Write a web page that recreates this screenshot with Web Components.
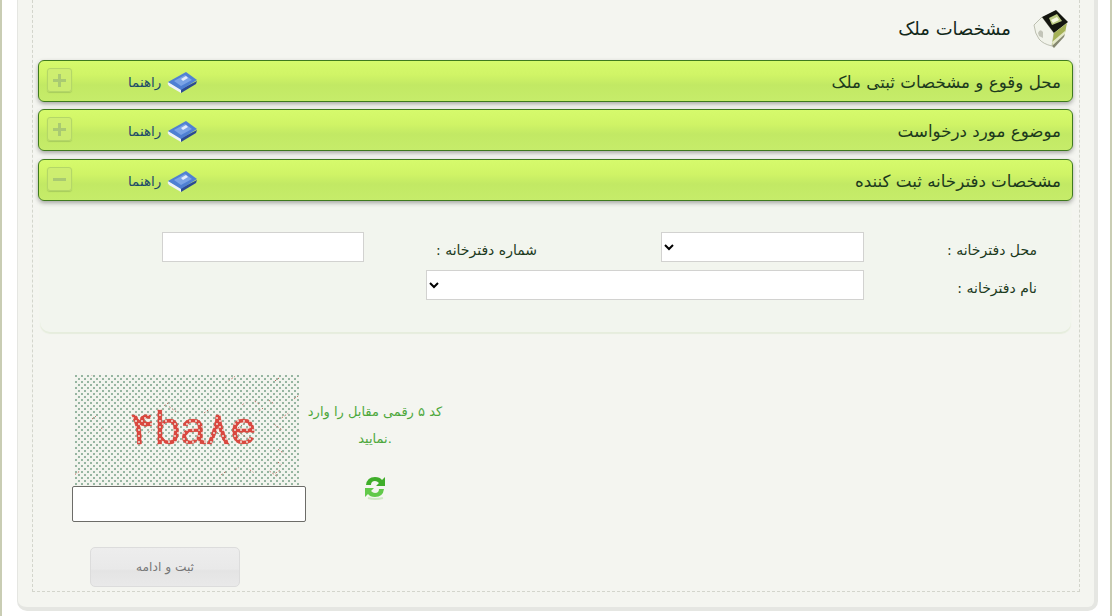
<!DOCTYPE html>
<html lang="fa">
<head>
<meta charset="utf-8">
<title>مشخصات ملک</title>
<style>
	html, body { margin: 0; background: #fff; }
	body { font-family: "DejaVu Sans", sans-serif; height: 616px; overflow: hidden; }
</style>
</head>
<body>
<form-page>
	<section-title>مشخصات ملک</section-title>
	<accordion-header label="محل وقوع و مشخصات ثبتی ملک"></accordion-header>
	<accordion-header label="موضوع مورد درخواست" style="margin-top:7px"></accordion-header>
	<accordion-header label="مشخصات دفترخانه ثبت کننده" expanded style="margin-top:8px"></accordion-header>
	<office-panel></office-panel>
	<captcha-box></captcha-box>
	<submit-button>ثبت و ادامه</submit-button>
</form-page>
<script>
class FormPage extends HTMLElement {
	constructor() {
		super();
		this.attachShadow({ mode: 'open' }).innerHTML = `
			<style>
				:host {
					border-left: 2px solid #c9cdb4;
					border-right: 2px solid #c9cdb4;
					box-sizing: border-box;
					display: block;
					height: 616px;
					padding: 0 12px 0 15px;
				}
				.card {
					background: #f4f5f0;
					border: solid #e5e6e2;
					border-radius: 0 0 10px 10px;
					border-width: 0 4px 4px 1px;
					box-sizing: border-box;
					height: 611px;
					padding: 0 14px 15px 14px;
				}
				.dashed {
					border: 1px dashed #d3d5cc;
					border-top: 0;
					box-sizing: border-box;
					height: 592px;
					padding: 0 6px 0 5px;
				}
			</style>
			<div class="card"><div class="dashed"><slot></slot></div></div>
		`;
	}
}

class SectionTitle extends HTMLElement {
	constructor() {
		super();
		this.attachShadow({ mode: 'open' }).innerHTML = `
			<style>
				:host {
					align-items: center;
					box-sizing: border-box;
					color: #12281a;
					direction: rtl;
					display: flex;
					font-size: 18px;
					gap: 20px;
					height: 60px;
					padding: 0 2px 4px 0;
				}
				svg { display: block; filter: blur(.3px); }
			</style>
			<svg width="40" height="40" viewBox="0 0 40 40">
				<path d="M3 17 L11 9 L23 25 L21 38 Q12 36 8 31 Q4 26 3 17 Z" fill="#f1f3ea" stroke="#a5a797" stroke-width=".7"/>
				<path d="M7 25 Q9 20 12 24 L12 30 L8 28 Z" fill="#c3c5b8"/>
				<path d="M11 9 L25 2 L37 14 L23 25 Z" fill="#14160f"/>
				<path d="M18 10 L26 6 L31 13 L21 17 Z" fill="#bdcc84"/>
				<path d="M20 12 L26 9 L28 12 L22 15 Z" fill="#f6f8e2"/>
				<path d="M23 25 L36 15 L34 25 L21 37 Z" fill="#a4b155"/>
				<path d="M21 34 L34 23 L34 26 L22 38 Z" fill="#e4e8c8"/>
				<path d="M21 38 L34 26 L33 29 L23 40 Z" fill="#55583a" opacity=".7"/>
			</svg>
			<span><slot></slot></span>
		`;
	}
}

class AccordionHeader extends HTMLElement {
	constructor() {
		super();
		this.attachShadow({ mode: 'open' }).innerHTML = `
			<style>
				:host {
					align-items: center;
					background: linear-gradient(#d6fa6c 0, #d0f466 35%, #c2e964 60%, #c6ec6a 100%);
					border: 1px solid #3f7a1e;
					border-radius: 6px;
					box-shadow: 0 2px 4px rgba(70, 70, 70, .45);
					box-sizing: border-box;
					display: flex;
					height: 42px;
					padding: 0 11px 0 8px;
					position: relative;
					z-index: 1;
				}
				.toggle {
					align-items: center;
					background: rgba(205, 236, 115, .8);
					border: 1px solid #b4d768;
					border-radius: 3px;
					box-shadow: 0 1px 1px #a8cc5c;
					box-sizing: border-box;
					display: flex;
					height: 24px;
					justify-content: center;
					margin-top: -2px;
					width: 25px;
				}
				.help {
					align-items: center;
					color: #1b4a68;
					direction: rtl;
					display: flex;
					flex-direction: row-reverse;
					font-size: 13.5px;
					gap: 6px;
					margin-left: 56px;
					padding-top: 2px;
				}
				.title {
					color: #1c3a1c;
					direction: rtl;
					font-size: 16.7px;
					margin-left: auto;
					padding-top: 1px;
				}
				svg { display: block; }
				.book { filter: blur(.3px); }
			</style>
			<span class="toggle">
				<svg width="13" height="13" viewBox="0 0 13 13">
					<rect x="0" y="5" width="13" height="3" fill="#a9ca72"/>
					<rect class="v" x="5" y="0" width="3" height="13" fill="#a9ca72"/>
				</svg>
			</span>
			<span class="help" dir="rtl">
				<span>راهنما</span>
				<svg class="book" width="31" height="22" viewBox="0 0 31 22">
					<path d="M1 11 L14 18 L14 22 L2 15 Q0 13 1 11 Z" fill="#f0f3f8"/>
					<path d="M14 18 L30 10 L29 13 L14 22 Z" fill="#2b4a94"/>
					<path d="M1 11 L19 1 L30 9 L14 19 Z" fill="#4f80d4"/>
					<path d="M7 10 L18 4 L25 9 L14 15 Z" fill="#7aa3e6"/>
					<path d="M14 8 L19 5 L21 7 L16 10 Z" fill="#e4edfa"/>
				</svg>
			</span>
			<span class="title"></span>
		`;
	}

	connectedCallback() {
		this.shadowRoot.querySelector('.title').textContent = this.getAttribute('label');
		if (this.hasAttribute('expanded')) {
			this.shadowRoot.querySelector('.v').remove();
		}
	}
}

class OfficePanel extends HTMLElement {
	constructor() {
		super();
		this.attachShadow({ mode: 'open' }).innerHTML = `
			<style>
				:host {
					background: #f2f5ee;
					border-radius: 0 0 10px 10px;
					box-shadow: 0 2px 1px #e6eddd;
					box-sizing: border-box;
					color: #1c3a1c;
					display: block;
					direction: rtl;
					font-size: 14px;
					height: 131px;
					margin: 0 2px;
					padding: 31px 34px 0 0;
				}
				.row { align-items: center; display: flex; height: 30px; }
				.row + .row { margin-top: 8px; }
				label { display: block; padding-top: 6px; text-align: right; white-space: nowrap; }
				.a { width: 173px; }
				.b { padding-right: 124px; width: 173px; box-sizing: content-box; }
				select, input {
					background: #fff;
					border: 1px solid #d2d2d0;
					border-radius: 0;
					box-sizing: border-box;
					height: 30px;
					margin: 0;
				}
				.short { width: 203px; }
				.long { width: 438px; }
				input.short { width: 202px; }
			</style>
			<div class="row">
				<label class="a">محل دفترخانه :</label>
				<select class="short"><option></option></select>
				<label class="b">شماره دفترخانه :</label>
				<input class="short" type="text">
			</div>
			<div class="row">
				<label class="a">نام دفترخانه :</label>
				<select class="long"><option></option></select>
			</div>
		`;
	}
}

class CaptchaBox extends HTMLElement {
	constructor() {
		super();
		this.attachShadow({ mode: 'open' }).innerHTML = `
			<style>
				:host {
					display: flex;
					margin: 43px 0 0 34px;
				}
				.left { width: 233px; }
				.picture { display: block; margin-left: 3px; }
				input {
					background: #fff;
					border: 1px solid #6c6c68;
					border-radius: 2px;
					box-sizing: border-box;
					display: block;
					height: 36px;
					margin: 0;
					width: 234px;
				}
				.hint {
					align-items: center;
					color: #4ea83c;
					direction: ltr;
					display: flex;
					flex-direction: column;
					font-size: 13px;
					line-height: 27px;
					padding-top: 23px;
					text-align: center;
					width: 140px;
				}
				.refresh { display: block; filter: blur(.4px); margin-top: 22px; }
			</style>
			<div class="left">
				<svg class="picture" width="224" height="111" viewBox="0 0 224 111">
					<defs>
						<pattern id="dots" width="6" height="6" patternUnits="userSpaceOnUse">
							<circle cx="1" cy="1" r=".95" fill="#6f9a80"/>
							<circle cx="4" cy="4" r=".95" fill="#6f9a80"/>
						</pattern>
						<pattern id="holes" width="6" height="6" patternUnits="userSpaceOnUse">
							<circle cx="4" cy="1" r=".9" fill="#000"/>
							<circle cx="1" cy="4" r=".9" fill="#000"/>
						</pattern>
						<mask id="brick" maskUnits="userSpaceOnUse" x="0" y="0" width="224" height="111">
							<rect width="224" height="111" fill="#fff"/>
							<rect width="224" height="111" fill="url(#holes)"/>
						</mask>
					</defs>
					<rect width="224" height="111" fill="#f2f4ee"/>
					<rect width="224" height="111" fill="url(#dots)"/>
					<g class="noise" stroke="#b5685a" stroke-width="1" stroke-dasharray="1.5 2"></g>
					<text x="55" y="69" fill="#d9483f" stroke="#d9483f" stroke-width=".5" mask="url(#brick)" font-family="'Liberation Sans','DejaVu Sans',sans-serif" font-size="46" direction="ltr">۴ba۸e</text>
				</svg>
				<input type="text">
			</div>
			<div class="hint">
				<span>کد ۵ رقمی مقابل را وارد نمایید.</span>
				<svg class="refresh" width="24" height="26" viewBox="0 0 24 26">
					<path d="M3 11 Q4 3 12 3 Q17 3 19 6 L22 3 L22 12 L13 12 L16 9 Q14 7 12 7 Q8 7 8 11 Z" fill="#3fae2a"/>
					<path d="M21 15 Q20 23 12 23 Q7 23 5 20 L2 23 L2 14 L11 14 L8 17 Q10 19 12 19 Q16 19 16 15 Z" fill="#62c94a"/>
					<path d="M5 24 Q12 26 20 24" stroke="#cfe8c4" stroke-width="2" fill="none"/>
				</svg>
			</div>
		`;
		this.addNoise();
	}

	addNoise() {
		let seed = 7;
		let next = () => (seed = (seed * 16807) % 2147483647) / 2147483647;
		let group = this.shadowRoot.querySelector('.noise');
		let lines = '';
		for (let i = 0; i < 30; i++) {
			let x = next() * 220;
			let y = next() * 108;
			let dx = 3 + next() * 5;
			let dy = (next() > .5 ? 1 : -1) * dx * .7;
			lines += `<line x1="${x.toFixed(1)}" y1="${y.toFixed(1)}" x2="${(x + dx).toFixed(1)}" y2="${(y + dy).toFixed(1)}"/>`;
		}
		group.innerHTML = lines;
	}
}

class SubmitButton extends HTMLElement {
	constructor() {
		super();
		this.attachShadow({ mode: 'open' }).innerHTML = `
			<style>
				:host {
					display: block;
					margin: 25px 0 0 52px;
					width: 150px;
				}
				button {
					background: linear-gradient(#ededed, #e9e9e9 55%, #e4e4e4 60%, #e9e9e9);
					border: 1px solid #dcdcdc;
					border-radius: 5px;
					color: #777;
					display: block;
					font: 12.2px "DejaVu Sans", sans-serif;
					height: 40px;
					padding: 0;
					width: 150px;
				}
			</style>
			<button type="button"><slot></slot></button>
		`;
	}
}

customElements.define('form-page', FormPage);
customElements.define('section-title', SectionTitle);
customElements.define('accordion-header', AccordionHeader);
customElements.define('office-panel', OfficePanel);
customElements.define('captcha-box', CaptchaBox);
customElements.define('submit-button', SubmitButton);
</script>
</body>
</html>
